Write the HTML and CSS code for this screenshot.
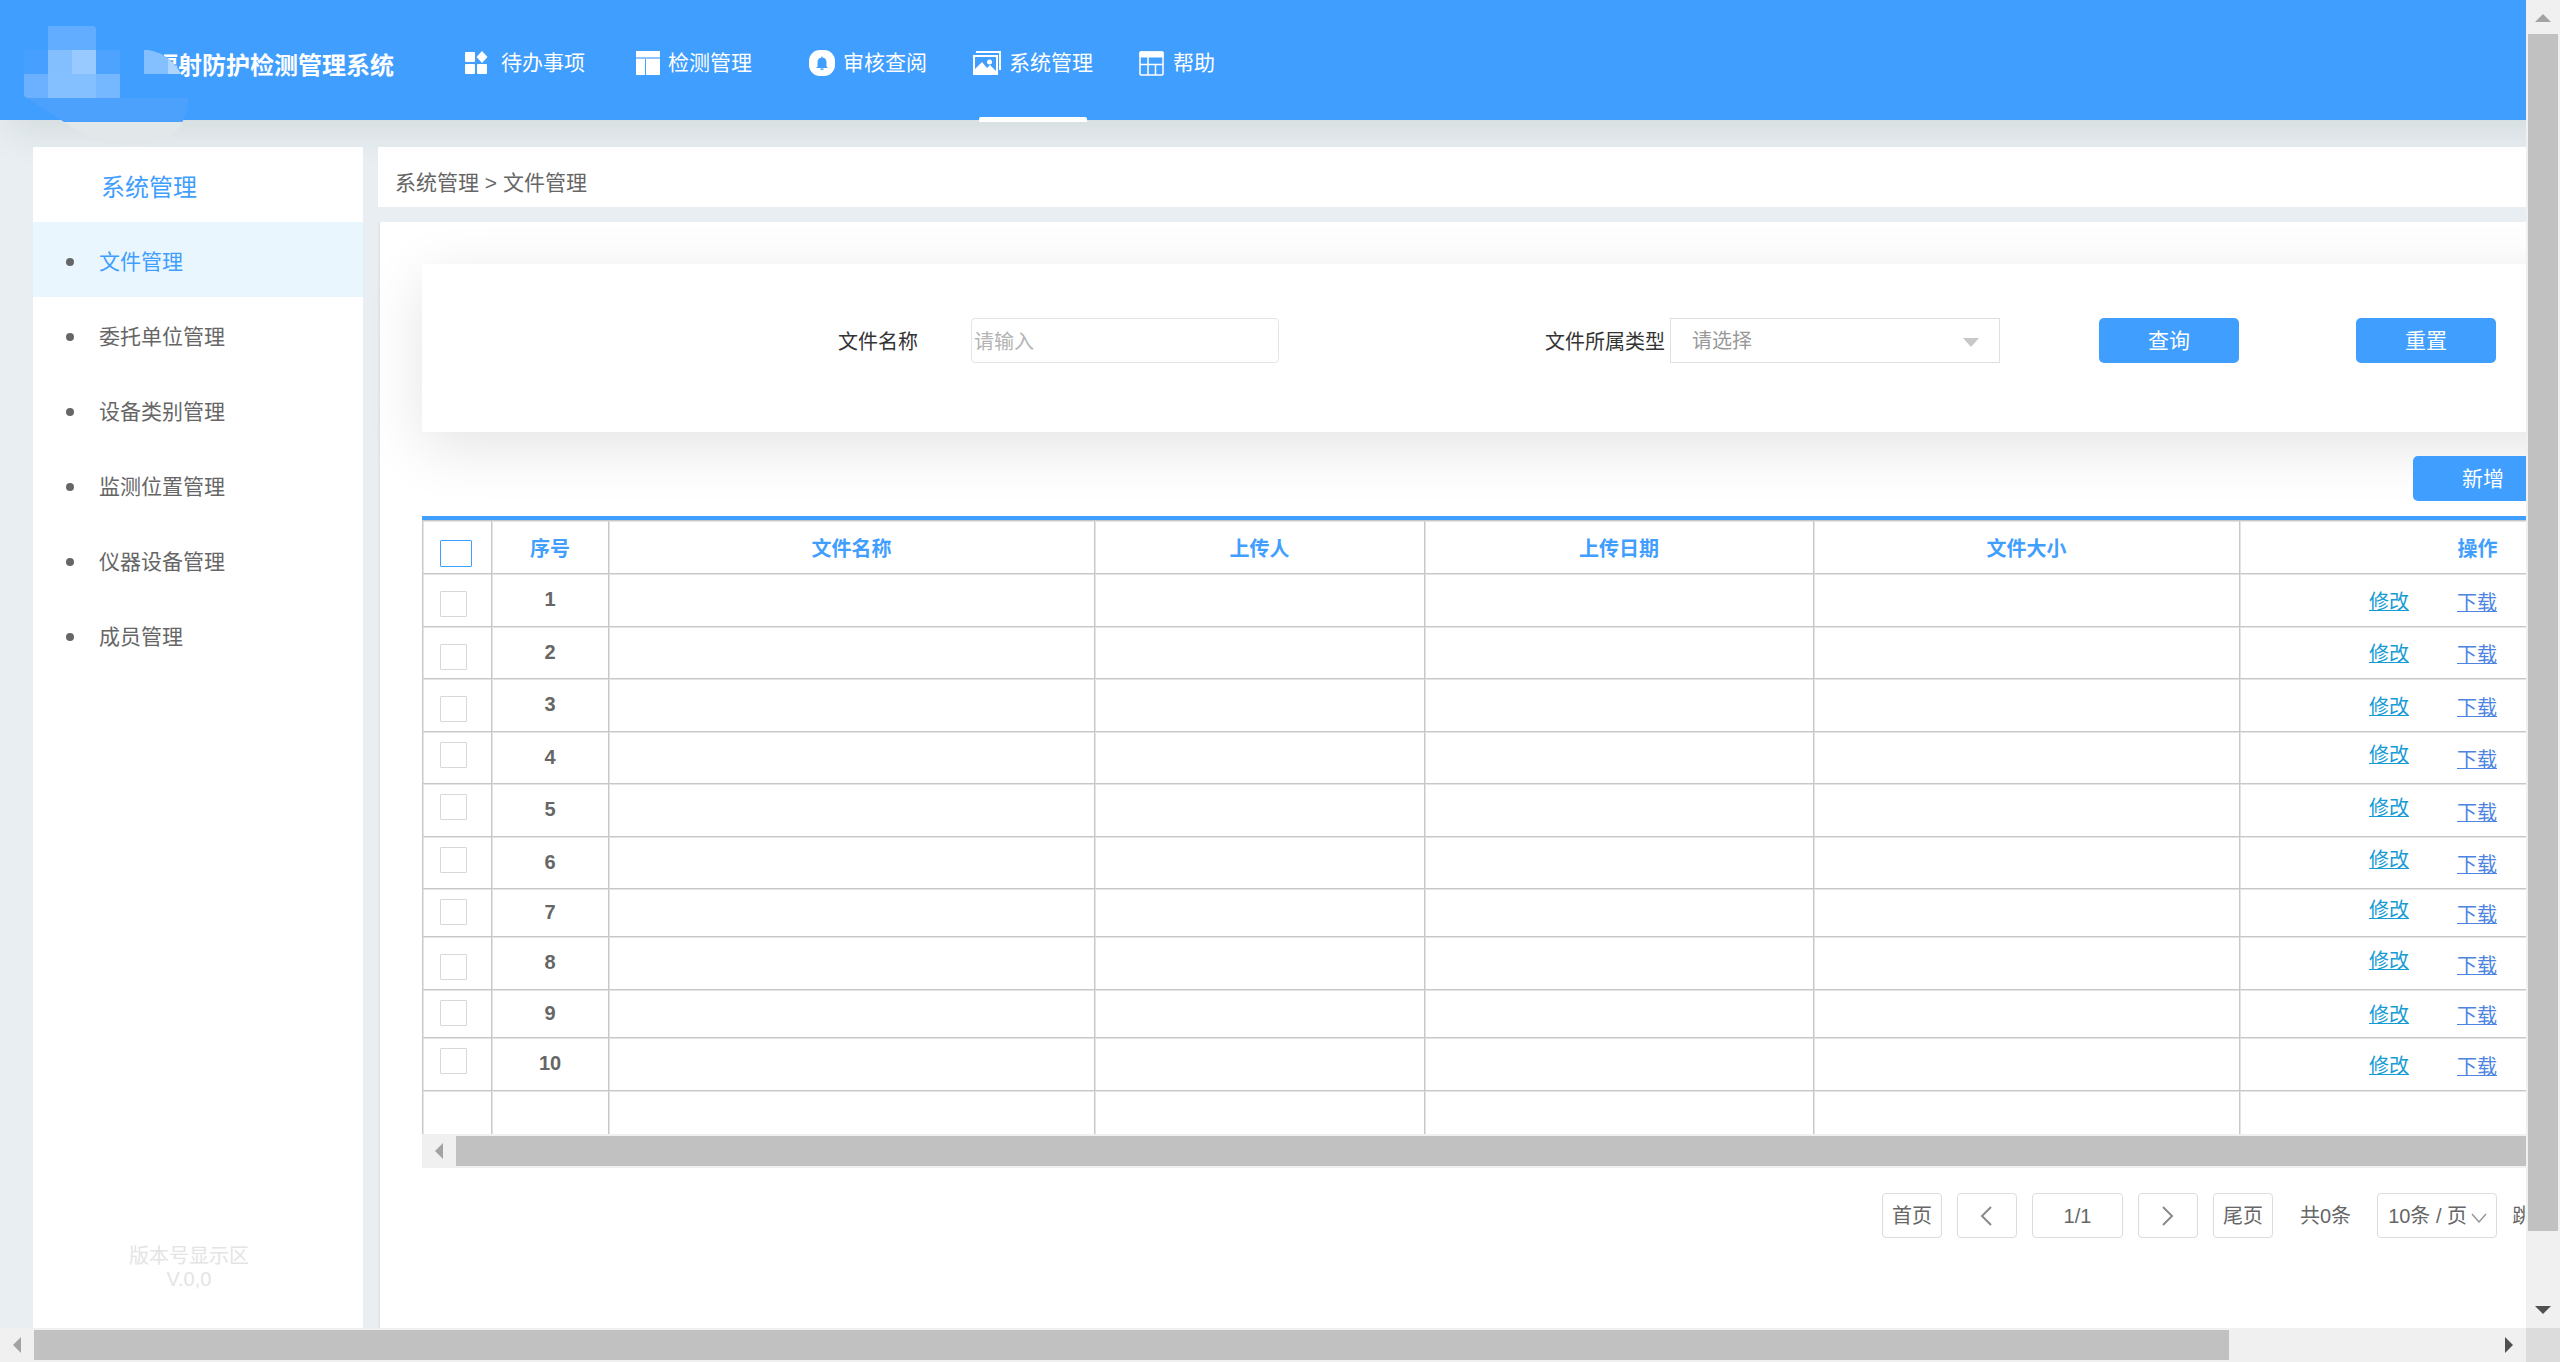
FILE: index.html
```html
<!DOCTYPE html>
<html lang="zh-CN">
<head>
<meta charset="utf-8">
<title>辐射防护检测管理系统</title>
<link rel="stylesheet" href="styles.css">
</head>
<body>
<div class="frame">
  <div class="viewport">
    <div class="page">
      <header class="topbar">
        <h1 class="brand">辐射防护检测管理系统</h1>
        <svg class="brand-logo" width="200" height="150" viewBox="0 0 200 150" aria-hidden="true">
          <defs><clipPath id="logo-shape"><path d="M24 26H94Q98 31 110 35L118 37V50H148Q162 52 172 62Q188 78 188 100Q187 120 175 133Q160 145 136 145H124Q105 144 90 138Q76 131 64 122L24 96Z"/></clipPath></defs>
          <g clip-path="url(#logo-shape)">
            <path fill="#409eff" d="M24 26H192V98H24z"/>
            <path fill="#62adff" d="M48 26H96V50H48z"/>
            <path fill="#479fff" d="M24 50H48V74H24z"/>
            <path fill="#83beff" d="M48 50H72V74H48z"/>
            <path fill="#98c9ff" d="M72 50H96V74H72z"/>
            <path fill="#4ea3ff" d="M96 50H120V74H96z"/>
            <path fill="#6bb1ff" d="M24 74H48V98H24z"/>
            <path fill="#84bfff" d="M48 74H96V98H48z"/>
            <path fill="#75b8ff" d="M96 74H120V98H96z"/>
            <path fill="#84bfff" d="M144 50H168V74H144z"/>
            <path fill="#afd5ff" d="M168 50H192V74H168z"/>
            <path fill="#4ca1fd" d="M24 98H192V122H24z"/>
            <path fill="#e2e7ea" d="M24 122H192V146H24z"/>
          </g>
        </svg>
        <nav class="nav">
          <a href="#" class="nav-item">
            <svg class="nav-icon" width="24" height="24" viewBox="0 0 24 24" fill="#fff"><rect x="0" y="1" width="10" height="10" rx="1"/><path d="M17 0L22.500 6L17 12L11.500 6z"/><rect x="0" y="13" width="10" height="10" rx="1"/><rect x="12" y="13" width="10" height="10" rx="1"/></svg>
            <span>待办事项</span></a>
          <a href="#" class="nav-item">
            <svg class="nav-icon" width="24" height="24" viewBox="0 0 24 24" fill="#fff"><path d="M0 0H24V6H0zM0 8H9V24H0zM10 8H24V24H10z"/><path d="M0 6H24V8H0z" opacity=".4"/></svg>
            <span>检测管理</span></a>
          <a href="#" class="nav-item">
            <svg class="nav-icon" width="26" height="26" viewBox="0 0 26 26"><rect width="26" height="26" rx="11" fill="#fff"/><path fill="#409eff" d="M12.500 6.500h1v1q4 .5 4 5v4l1.500 1.500H7l1.500-1.500v-4q0-4.500 4-5zM11 18.500h4q-.5 1.500-2 1.500t-2-1.500z"/></svg>
            <span>审核查阅</span></a>
          <a href="#" class="nav-item active">
            <svg class="nav-icon" width="28" height="24" viewBox="0 0 28 24"><path fill="none" stroke="#fff" stroke-width="2" d="M3 1H27V19"/><rect x="1" y="5" width="23" height="18" fill="none" stroke="#fff" stroke-width="2"/><path fill="#fff" d="M2 22V18L9 11L14 17L17 14L23 20V22z"/><circle cx="16.500" cy="11" r="2.500" fill="#fff"/></svg>
            <span>系统管理</span></a>
          <a href="#" class="nav-item">
            <svg class="nav-icon" width="26" height="26" viewBox="0 0 26 26" fill="none" stroke="#fff"><rect x="1" y="2" width="23" height="23" rx="1" stroke-width="1.500"/><path d="M1 2H24V7H1z" fill="#fff"/><path d="M1 14.500H24M9 7V25M16.500 15V25" stroke-width="1.500"/></svg>
            <span>帮助</span></a>
        </nav>
      </header>

      <div class="body">
        <aside class="sidebar">
          <h2 class="side-title">系统管理</h2>
          <ul class="side-menu">
            <li><a href="#" class="active">文件管理</a></li>
            <li><a href="#">委托单位管理</a></li>
            <li><a href="#">设备类别管理</a></li>
            <li><a href="#">监测位置管理</a></li>
            <li><a href="#">仪器设备管理</a></li>
            <li><a href="#">成员管理</a></li>
          </ul>
          <p class="version">版本号显示区<br>V.0,0</p>
        </aside>

        <div class="content">
          <div class="crumbs">系统管理 &gt; 文件管理</div>
          <main class="panel">
            <form class="filter">
              <label class="label-name" for="fname">文件名称</label>
              <input class="text-input" id="fname" type="text" placeholder="请输入">
              <label class="label-type" for="ftype">文件所属类型</label>
              <span class="select-box">
                <select id="ftype"><option>请选择</option></select>
                <svg class="caret" width="16" height="9" viewBox="0 0 16 9"><path fill="#c8c8c8" d="M0 0H16L8 9z"/></svg>
              </span>
              <button type="button" class="btn btn-query">查询</button>
              <button type="reset" class="btn btn-reset">重置</button>
            </form>
            <div class="toolbar"><button type="button" class="btn">新增</button></div>

            <div class="table-box">
              <table>
                <colgroup><col class="c-check"><col class="c-no"><col class="c-name"><col class="c-user"><col class="c-date"><col class="c-size"><col></colgroup>
                <thead><tr><th><input type="checkbox" aria-label="全选"></th><th>序号</th><th>文件名称</th><th>上传人</th><th>上传日期</th><th>文件大小</th><th>操作</th></tr></thead>
                <tbody>
                  <tr class="low"><td><input type="checkbox" aria-label="1"></td><td>1</td><td></td><td></td><td></td><td></td><td><div class="ops"><a href="#" class="edit">修改</a><a href="#" class="down">下载</a></div></td></tr>
                  <tr class="low"><td><input type="checkbox" aria-label="2"></td><td>2</td><td></td><td></td><td></td><td></td><td><div class="ops"><a href="#" class="edit">修改</a><a href="#" class="down">下载</a></div></td></tr>
                  <tr class="low"><td><input type="checkbox" aria-label="3"></td><td>3</td><td></td><td></td><td></td><td></td><td><div class="ops"><a href="#" class="edit">修改</a><a href="#" class="down">下载</a></div></td></tr>
                  <tr class="raised"><td><input type="checkbox" aria-label="4"></td><td>4</td><td></td><td></td><td></td><td></td><td><div class="ops"><a href="#" class="edit">修改</a><a href="#" class="down">下载</a></div></td></tr>
                  <tr class="raised"><td><input type="checkbox" aria-label="5"></td><td>5</td><td></td><td></td><td></td><td></td><td><div class="ops"><a href="#" class="edit">修改</a><a href="#" class="down">下载</a></div></td></tr>
                  <tr class="raised"><td><input type="checkbox" aria-label="6"></td><td>6</td><td></td><td></td><td></td><td></td><td><div class="ops"><a href="#" class="edit">修改</a><a href="#" class="down">下载</a></div></td></tr>
                  <tr class="raised short"><td><input type="checkbox" aria-label="7"></td><td>7</td><td></td><td></td><td></td><td></td><td><div class="ops"><a href="#" class="edit">修改</a><a href="#" class="down">下载</a></div></td></tr>
                  <tr class="raised low"><td><input type="checkbox" aria-label="8"></td><td>8</td><td></td><td></td><td></td><td></td><td><div class="ops"><a href="#" class="edit">修改</a><a href="#" class="down">下载</a></div></td></tr>
                  <tr class="short"><td><input type="checkbox" aria-label="9"></td><td>9</td><td></td><td></td><td></td><td></td><td><div class="ops"><a href="#" class="edit">修改</a><a href="#" class="down">下载</a></div></td></tr>
                  <tr><td><input type="checkbox" aria-label="10"></td><td>10</td><td></td><td></td><td></td><td></td><td><div class="ops"><a href="#" class="edit">修改</a><a href="#" class="down">下载</a></div></td></tr>
                  <tr class="rest"><td></td><td></td><td></td><td></td><td></td><td></td><td></td></tr>
                </tbody>
              </table>
              <div class="scroll-x inner">
                <svg class="arrow" width="34" height="34" viewBox="0 0 34 34"><path fill="#a3a3a3" d="M21 9V25L13 17z"/></svg>
                <div class="thumb"></div>
              </div>
            </div>

            <div class="pager">
              <button type="button" class="page-btn">首页</button>
              <button type="button" class="page-btn" aria-label="上一页"><svg width="14" height="20" viewBox="0 0 14 20"><path fill="none" stroke="#8a8a8a" stroke-width="2" d="M11 1L2 10L11 19"/></svg></button>
              <button type="button" class="page-btn current">1/1</button>
              <button type="button" class="page-btn" aria-label="下一页"><svg width="14" height="20" viewBox="0 0 14 20"><path fill="none" stroke="#8a8a8a" stroke-width="2" d="M2 1L11 10L2 19"/></svg></button>
              <button type="button" class="page-btn">尾页</button>
              <span class="total">共0条</span>
              <span class="select-box size">
                <select aria-label="每页条数"><option>10条 / 页</option></select>
                <svg class="caret" width="16" height="10" viewBox="0 0 16 10"><path fill="none" stroke="#999" stroke-width="1.500" d="M1 1L8 9L15 1"/></svg>
              </span>
              <span class="jump">跳转</span>
            </div>
          </main>
        </div>
      </div>
    </div>
  </div>

  <div class="scroll-y">
    <svg class="arrow" width="34" height="34" viewBox="0 0 34 34"><path fill="#a3a3a3" d="M9 22H25L17 14z"/></svg>
    <div class="track"><div class="thumb" style="height:95%"></div></div>
    <svg class="arrow" width="34" height="34" viewBox="0 0 34 34"><path fill="#505050" d="M9 12H25L17 20z"/></svg>
  </div>
  <div class="scroll-x">
    <svg class="arrow" width="34" height="34" viewBox="0 0 34 34"><path fill="#a3a3a3" d="M21 9V25L13 17z"/></svg>
    <div class="track"><div class="thumb" style="width:89.3%"></div></div>
    <svg class="arrow" width="34" height="34" viewBox="0 0 34 34"><path fill="#505050" d="M13 9V25L21 17z"/></svg>
  </div>
  <div class="corner"></div>
</div>
</body>
</html>
```

FILE: styles.css
```css
* { box-sizing: border-box; }

body {
  margin: 0;
  font-family: "Liberation Sans", "Noto Sans CJK SC", sans-serif;
  font-size: 20px;
  line-height: 24px;
  color: #666;
}

h1, h2, p, ul { margin: 0; padding: 0; }
ul { list-style: none; }
button, input, select { font: inherit; }

.frame {
  display: grid;
  grid-template-columns: minmax(0, 1fr) 34px;
  grid-template-rows: minmax(0, 1fr) 34px;
  height: 100vh;
}

.viewport { overflow: hidden; background: #e8eef2; }

.page {
  display: flex;
  flex-direction: column;
  width: 112%;
  min-height: 100%;
}

/* Header */
.topbar {
  position: relative;
  display: flex;
  align-items: center;
  height: 120px;
  padding-left: 154px;
  background: #409eff;
  box-shadow: 10px 8px 40px rgba(40, 60, 40, .12);
}
.brand { font-size: 24px; line-height: 30px; color: #fff; padding-top: 11px; }
.brand-logo { position: absolute; left: 0; top: 0; }

.nav { display: flex; align-self: stretch; gap: 46px; padding-left: 71px; }
.nav-item {
  position: relative;
  display: flex;
  align-items: center;
  gap: 8px;
  padding-top: 6px;
  color: #fff;
  font-size: 21px;
  text-decoration: none;
}
.nav-item:first-child { gap: 12px; }
.nav-item:nth-child(2) { padding-left: 5px; }
.nav-item:nth-child(3) { padding-left: 11px; }
.nav-item.active::after {
  content: "";
  position: absolute;
  left: 6px;
  right: 6px;
  bottom: -2px;
  height: 5px;
  border-radius: 2px 2px 0 0;
  background: #fff;
}
.nav-icon { flex: none; }

/* Layout */
.body { flex: 1; display: flex; gap: 15px; padding: 27px 0 0 33px; }

.sidebar {
  display: flex;
  flex-direction: column;
  width: 330px;
  background: #fff;
  position: relative;
}
.side-title {
  padding: 26px 0 19px 68px;
  font-size: 24px;
  line-height: 30px;
  font-weight: 400;
  color: #409eff;
}
.side-menu a {
  display: flex;
  align-items: center;
  gap: 25px;
  height: 75px;
  padding: 4px 0 0 33px;
  font-size: 21px;
  color: #666;
  text-decoration: none;
}
.side-menu a::before {
  content: "";
  width: 8px;
  height: 8px;
  border-radius: 50%;
  background: #666;
}
.side-menu a.active { background: #eaf6fd; color: #409eff; }
.version {
  margin-top: auto;
  padding: 0 18px 37px 0;
  line-height: 23px;
  text-align: center;
  color: #e4e4e4;
}

.content { flex: 1; min-width: 0; display: flex; flex-direction: column; gap: 15px; position: relative; }
.crumbs {
  height: 60px;
  padding: 6px 17px 0;
  line-height: 60px;
  font-size: 21px;
  background: #fff;
}
.panel {
  flex: 1;
  padding: 42px 114px 0 42px;
  border-left: 2px solid #e2e6e9;
  background: #fff;
}

/* Filter */
.filter {
  display: flex;
  align-items: flex-start;
  height: 168px;
  padding: 54px 0 0 416px;
  background: #fff;
  box-shadow: 0 15px 60px rgba(0, 0, 0, .11);
}
.filter label { line-height: 48px; color: #333; }
.label-name { width: 133px; }
.label-type { width: 125px; margin-left: 266px; }
.text-input {
  width: 308px;
  height: 45px;
  padding: 3px 2px 0;
  border: 1px solid #e4e4e4;
  border-radius: 4px;
  background: #fff;
}
.text-input::placeholder { color: #b4b4b4; }

.select-box { position: relative; display: block; width: 330px; height: 45px; }
.select-box select {
  appearance: none;
  width: 100%;
  height: 100%;
  padding: 1px 21px 0;
  border: 1px solid #dfdfdf;
  border-radius: 0;
  background: #fff;
  color: #999;
}
.caret { position: absolute; right: 21px; top: 20px; pointer-events: none; }

.btn {
  width: 140px;
  height: 45px;
  padding: 1px 0 0;
  border: 0;
  border-radius: 5px;
  background: #409eff;
  color: #fff;
  font-size: 21px;
}
.btn-query { margin-left: 99px; }
.btn-reset { margin-left: 117px; }

.toolbar { display: flex; justify-content: flex-end; padding: 24px 162px 15px 0; }

/* Table */
.table-box { position: relative; border-top: 4px solid #409eff; background: #fff; }
table { width: 100%; table-layout: fixed; border-spacing: 0; }
.c-check { width: 69px; }
.c-no { width: 117px; }
.c-name { width: 486px; }
.c-user { width: 330px; }
.c-date { width: 389px; }
.c-size { width: 426px; }
tr { height: 53px; }
tbody tr:nth-child(even) { height: 52px; }
tbody tr:nth-child(8), tbody tr:nth-child(10) { height: 53px; }
tbody tr.short { height: 48px; }
tbody tr.rest { height: 44px; }
th, td {
  padding: 0;
  border-left: 1px solid #c8c8c8;
  border-top: 1px solid #c8c8c8;
  box-shadow: inset 1px 1px 0 #e4e4e4;
  text-align: center;
  font-weight: 700;
}
th { padding-top: 3px; color: #409eff; }
td:nth-child(2) { padding-bottom: 2px; }
th:first-child, td:first-child { padding: 10px 0 0 17px; vertical-align: top; }
.low td:first-child { padding-top: 17px; }
thead th:first-child { padding-top: 19px; }
input[type="checkbox"] {
  appearance: none;
  display: block;
  width: 27px;
  height: 26px;
  margin: 0;
  border: 1px solid #d8d8d8;
  border-radius: 1px;
  background: #fff;
}
thead input[type="checkbox"] { width: 32px; height: 27px; border-color: #409eff; }

.ops { display: flex; gap: 48px; padding: 2px 0 0 129px; font-weight: 400; }
.ops a { text-underline-offset: 1px; text-decoration-thickness: 1px; }
.edit { padding-top: 2px; color: #169bd5; }
.raised .edit { padding-top: 0; margin-top: -2px; }
.down { padding-top: 3px; color: #4d84e2; }

/* Scrollbars */
.scroll-x { display: flex; height: 34px; background: #f0f0f0; }
.scroll-x .track, .scroll-y .track { flex: 1; }
.scroll-x .thumb { height: 30px; margin-top: 2px; background: #c1c1c1; }
.scroll-x.inner .thumb { flex: 1; }
.scroll-y { display: flex; flex-direction: column; background: #f0f0f0; }
.scroll-y .thumb { width: 30px; margin-left: 2px; background: #c1c1c1; }
.arrow { flex: none; display: block; }
.corner { background: #dcdcdc; }

/* Pager */
.pager { display: flex; gap: 15px; padding: 25px 0 0 1460px; line-height: 45px; white-space: nowrap; }
.page-btn {
  display: flex;
  flex: none;
  align-items: center;
  justify-content: center;
  width: 60px;
  height: 45px;
  padding: 1px 0 0;
  border: 1px solid #dcdcdc;
  border-radius: 4px;
  background: #fff;
  color: #666;
}
.page-btn.current { width: 91px; }
.total { padding: 1px 11px 0 12px; }
.size { width: 120px; flex: none; }
.size select { padding: 0 10px; border-color: #dcdcdc; border-radius: 4px; color: #666; }
.size .caret { right: 10px; }
.jump { padding-top: 1px; }
```
